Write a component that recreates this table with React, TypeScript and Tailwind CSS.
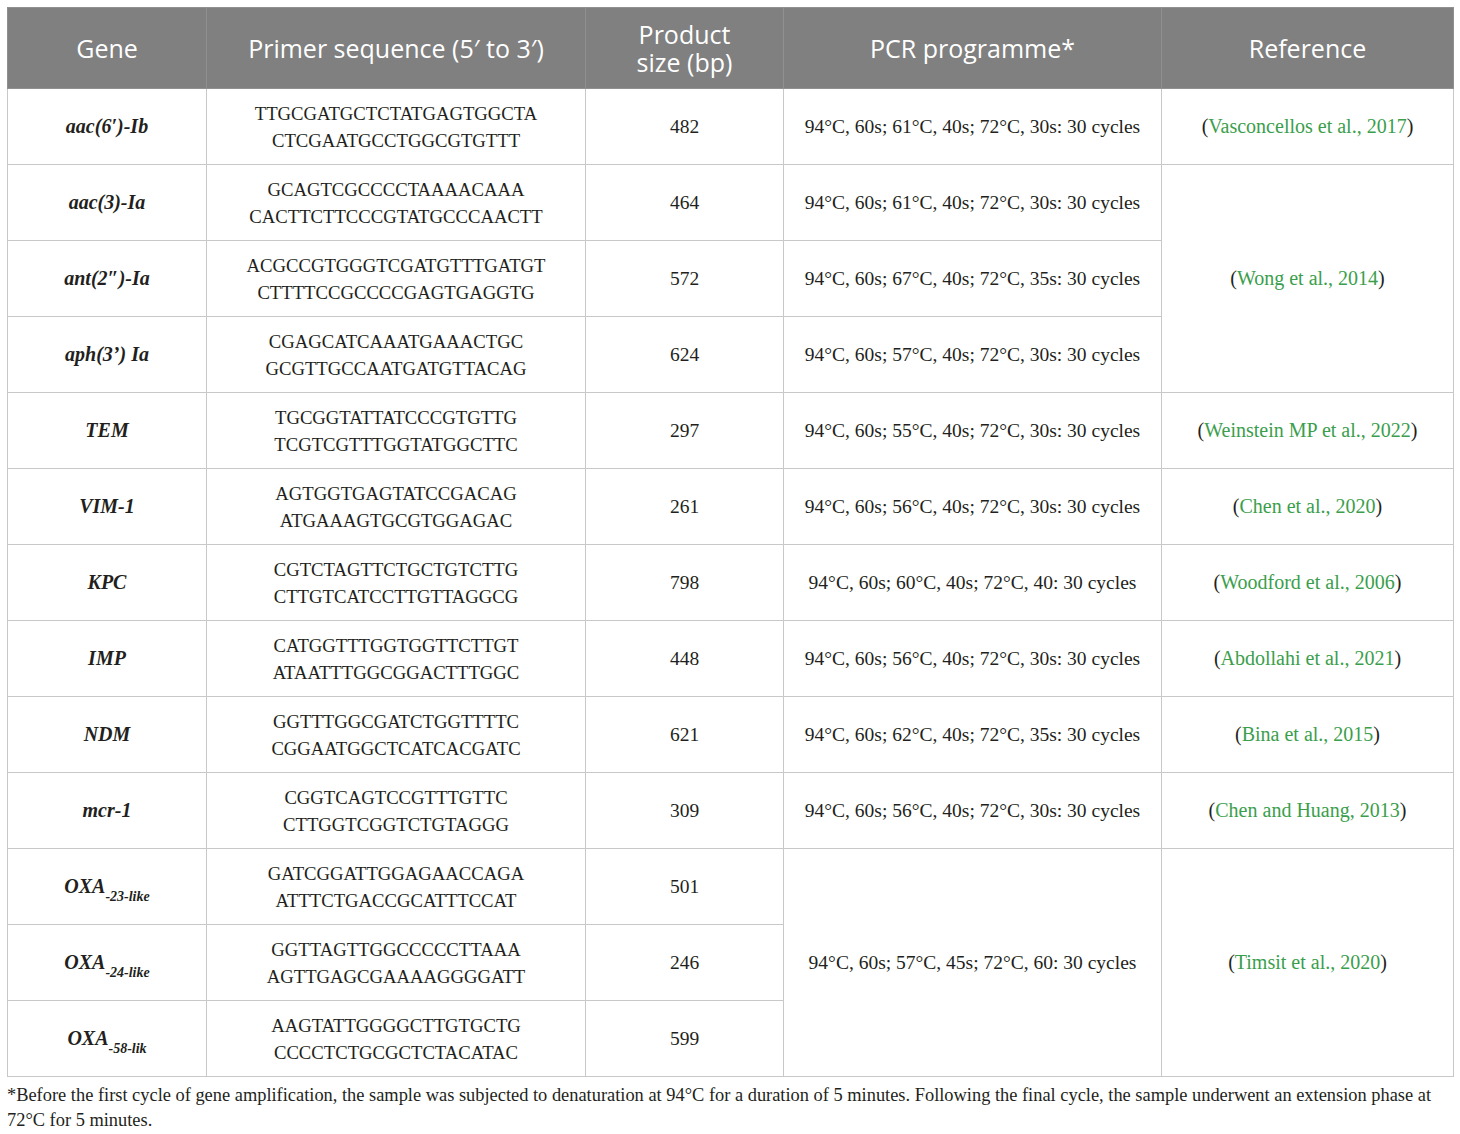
import React from "react";

const serif = "font-['Liberation_Serif',_'Times_New_Roman',_serif]";
const sans = "font-['Open_Sans',_'Noto_Sans',_sans-serif]";

type Row = {
  gene: React.ReactNode;
  p1: string;
  p2: string;
  size: string;
  pcr?: string;
  pcrSpan?: number;
  ref?: string;
  refSpan?: number;
};

const Oxa = ({ sub }: { sub: string }) => (
  <span>
    OXA<sub className="text-[14px] align-[-4px]">{sub}</sub>
  </span>
);

const rows: Row[] = [
  { gene: "aac(6′)-Ib", p1: "TTGCGATGCTCTATGAGTGGCTA", p2: "CTCGAATGCCTGGCGTGTTT", size: "482", pcr: "94°C, 60s; 61°C, 40s; 72°C, 30s: 30 cycles", ref: "Vasconcellos et al., 2017" },
  { gene: "aac(3)-Ia", p1: "GCAGTCGCCCCTAAAACAAA", p2: "CACTTCTTCCCGTATGCCCAACTT", size: "464", pcr: "94°C, 60s; 61°C, 40s; 72°C, 30s: 30 cycles", ref: "Wong et al., 2014", refSpan: 3 },
  { gene: "ant(2″)-Ia", p1: "ACGCCGTGGGTCGATGTTTGATGT", p2: "CTTTTCCGCCCCGAGTGAGGTG", size: "572", pcr: "94°C, 60s; 67°C, 40s; 72°C, 35s: 30 cycles" },
  { gene: "aph(3’) Ia", p1: "CGAGCATCAAATGAAACTGC", p2: "GCGTTGCCAATGATGTTACAG", size: "624", pcr: "94°C, 60s; 57°C, 40s; 72°C, 30s: 30 cycles" },
  { gene: "TEM", p1: "TGCGGTATTATCCCGTGTTG", p2: "TCGTCGTTTGGTATGGCTTC", size: "297", pcr: "94°C, 60s; 55°C, 40s; 72°C, 30s: 30 cycles", ref: "Weinstein MP et al., 2022" },
  { gene: "VIM-1", p1: "AGTGGTGAGTATCCGACAG", p2: "ATGAAAGTGCGTGGAGAC", size: "261", pcr: "94°C, 60s; 56°C, 40s; 72°C, 30s: 30 cycles", ref: "Chen et al., 2020" },
  { gene: "KPC", p1: "CGTCTAGTTCTGCTGTCTTG", p2: "CTTGTCATCCTTGTTAGGCG", size: "798", pcr: "94°C, 60s; 60°C, 40s; 72°C, 40: 30 cycles", ref: "Woodford et al., 2006" },
  { gene: "IMP", p1: "CATGGTTTGGTGGTTCTTGT", p2: "ATAATTTGGCGGACTTTGGC", size: "448", pcr: "94°C, 60s; 56°C, 40s; 72°C, 30s: 30 cycles", ref: "Abdollahi et al., 2021" },
  { gene: "NDM", p1: "GGTTTGGCGATCTGGTTTTC", p2: "CGGAATGGCTCATCACGATC", size: "621", pcr: "94°C, 60s; 62°C, 40s; 72°C, 35s: 30 cycles", ref: "Bina et al., 2015" },
  { gene: "mcr-1", p1: "CGGTCAGTCCGTTTGTTC", p2: "CTTGGTCGGTCTGTAGGG", size: "309", pcr: "94°C, 60s; 56°C, 40s; 72°C, 30s: 30 cycles", ref: "Chen and Huang, 2013" },
  { gene: <Oxa sub="-23-like" />, p1: "GATCGGATTGGAGAACCAGA", p2: "ATTTCTGACCGCATTTCCAT", size: "501", pcr: "94°C, 60s; 57°C, 45s; 72°C, 60: 30 cycles", pcrSpan: 3, ref: "Timsit et al., 2020", refSpan: 3 },
  { gene: <Oxa sub="-24-like" />, p1: "GGTTAGTTGGCCCCCTTAAA", p2: "AGTTGAGCGAAAAGGGGATT", size: "246" },
  { gene: <Oxa sub="-58-lik" />, p1: "AAGTATTGGGGCTTGTGCTG", p2: "CCCCTCTGCGCTCTACATAC", size: "599" },
];

const td = "border border-[#c8c8c8] text-center align-middle";

export default function App() {
  return (
    <div className={`bg-white w-[1460px] h-[1134px] pt-[7px] px-[7px] text-[#231f20] ${serif}`}>
      <table className="border-collapse table-fixed w-[1446px]">
        <colgroup>
          <col className="w-[199px]" />
          <col className="w-[379px]" />
          <col className="w-[198px]" />
          <col className="w-[378px]" />
          <col className="w-[292px]" />
        </colgroup>
        <thead>
          <tr className={`h-[81px] bg-[#7f807f] text-white text-[25px] leading-[28px] ${sans}`}>
            <th className="border border-[#8f908f] font-normal">Gene</th>
            <th className="border border-[#8f908f] font-normal">Primer sequence (5′ to 3′)</th>
            <th className="border border-[#8f908f] font-normal">Product<br />size (bp)</th>
            <th className="border border-[#8f908f] font-normal">PCR programme*</th>
            <th className="border border-[#8f908f] font-normal">Reference</th>
          </tr>
        </thead>
        <tbody className="leading-[27px]">
          {rows.map((r, i) => (
            <tr key={i} className="h-[76px]">
              <td className={`${td} font-bold italic text-[20px]`}>{r.gene}</td>
              <td className={`${td} text-[18.7px]`}>
                {r.p1}
                <br />
                {r.p2}
              </td>
              <td className={`${td} text-[19.5px]`}>{r.size}</td>
              {r.pcr && (
                <td className={`${td} text-[19.5px]`} rowSpan={r.pcrSpan ?? 1}>
                  {r.pcr}
                </td>
              )}
              {r.ref && (
                <td className={`${td} text-[20px]`} rowSpan={r.refSpan ?? 1}>
                  (<span className="text-[#3a9e4c]">{r.ref}</span>)
                </td>
              )}
            </tr>
          ))}
        </tbody>
      </table>
      <p className="text-[18.4px] leading-[25px] mt-[6px]">
        *Before the first cycle of gene amplification, the sample was subjected to denaturation at 94°C for a duration of 5 minutes. Following the final cycle, the sample underwent an extension phase at 72°C for 5 minutes.
      </p>
    </div>
  );
}
